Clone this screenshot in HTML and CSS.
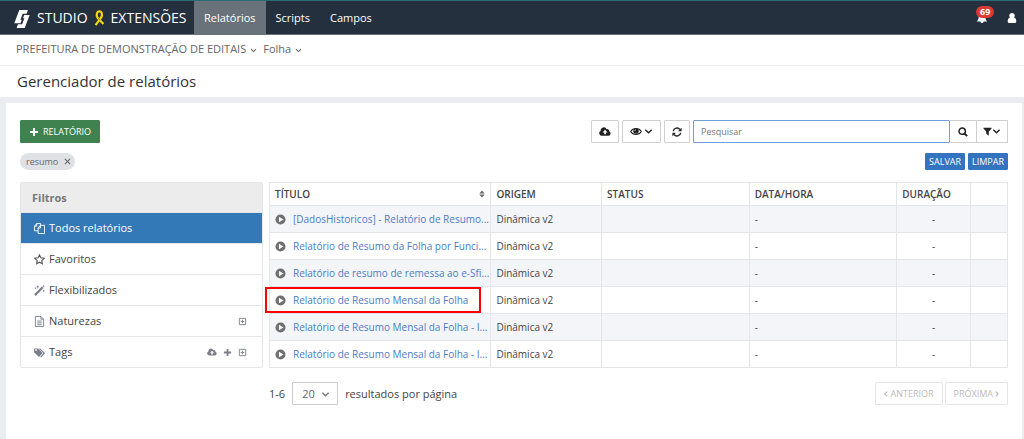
FILE: index.html
```html
<!DOCTYPE html>
<html lang="pt-BR">
<head>
<meta charset="utf-8">
<meta name="viewport" content="width=device-width, initial-scale=1">
<title>Gerenciador de relatórios</title>
<link rel="stylesheet" href="styles.css">
</head>
<body>
<svg class="sprite" aria-hidden="true">
  <symbol id="chevron" viewBox="0 0 10 10"><path d="M1.5 3 5 6.5 8.5 3" fill="none" stroke="currentColor" stroke-width="1.5"/></symbol>
  <symbol id="plus" viewBox="0 0 10 10"><path d="M5 1v8M1 5h8" fill="none" stroke="currentColor" stroke-width="2"/></symbol>
  <symbol id="cloud" viewBox="0 0 16 12"><path fill="currentColor" fill-rule="evenodd" d="M3.6 11.5A3.3 3.3 0 0 1 2.2 5.2 4.2 4.2 0 0 1 10.2 3a2.3 2.3 0 0 1 3.2 2.7 3 3 0 0 1-.6 5.8zM8 3.8 4.8 7.2H7v2.6h2.2V7.2h2.2z"/></symbol>
  <symbol id="play" viewBox="0 0 12 12"><path fill="currentColor" fill-rule="evenodd" d="M6 .5a5.5 5.5 0 1 0 0 11 5.5 5.5 0 0 0 0-11zM4.3 3v6L9.3 6z"/></symbol>
  <symbol id="expand" viewBox="0 0 10 10"><path d="M1.5 1.5h7v7h-7zM5 3v4M3 5h4" fill="none" stroke="currentColor"/></symbol>
</svg>

<header class="topbar">
  <a class="brand" href="#">
    <svg class="logo" viewBox="0 0 16 18" aria-hidden="true"><path fill="#fff" d="M5.300 0h8.600L12.600 3.800H8.700L6.400 9.800h1.400L6.500 13.200H.3zM10.200 4.900h5.500L10.700 18H2.600L4 14.200h4.100l2.300-6H9z"/></svg>
    <span>STUDIO</span>
    <svg class="ribbon" viewBox="0 0 11 16" aria-hidden="true"><path d="M1.600 15.200 7.200 7.500C8.600 5 8 1.400 5.400 1.400S2 5 3.400 7.500l6 6.500" fill="none" stroke="#f5d50a" stroke-width="2.200"/><path d="M3.800 7.600 6.200 10.600" stroke="#ad8a08" stroke-width="1"/></svg>
    <span>EXTENSÕES</span>
  </a>
  <nav class="menu">
    <a class="menu-link active" href="#">Relatórios</a>
    <a class="menu-link" href="#">Scripts</a>
    <a class="menu-link" href="#">Campos</a>
  </nav>
  <div class="account">
    <button class="plain bell" aria-label="Notificações">
      <svg class="icon12" viewBox="0 0 12 12" aria-hidden="true"><path fill="#fff" d="M6 1C3.500 1 2.700 3 2.700 5S2 8.300.7 9.500h3.800a1.500 1.500 0 0 0 3 0h3.800C10 8.300 9.300 7 9.300 5S8.500 1 6 1z"/></svg>
      <span class="badge">69</span>
    </button>
    <button class="plain" aria-label="Conta">
      <svg class="icon12" viewBox="0 0 12 12" aria-hidden="true"><path fill="#fff" d="M6 1a2.700 2.700 0 0 1 2 4.600C9.800 5.800 10.300 8 10.300 9.500c0 .9-.6 1.500-1.400 1.500H3.100c-.8 0-1.400-.6-1.400-1.500 0-1.500.5-3.700 2.300-3.900A2.700 2.700 0 0 1 6 1z"/></svg>
    </button>
  </div>
</header>

<nav class="context">
  <button class="plain context-item">PREFEITURA DE DEMONSTRAÇÃO DE EDITAIS <svg class="icon9"><use href="#chevron"/></svg></button>
  <button class="plain context-item">Folha <svg class="icon9"><use href="#chevron"/></svg></button>
</nav>
<div class="heading"><h1>Gerenciador de relatórios</h1></div>

<main class="card">
  <div class="toolbar">
    <button class="btn create"><svg class="icon10"><use href="#plus"/></svg>RELATÓRIO</button>
    <div class="tools">
      <button class="btn" aria-label="Enviar"><svg class="cloud"><use href="#cloud"/></svg></button>
      <button class="btn view" aria-label="Visualizar">
        <svg class="eye" viewBox="0 0 14 10" aria-hidden="true"><path d="M.8 5C3.500.4 10.500.4 13.200 5 10.500 9.600 3.500 9.600.8 5z" fill="none" stroke="currentColor" stroke-width="1.200"/><circle cx="7" cy="4.500" r="3.200" fill="currentColor"/><path d="M5.500 4.300A1.500 1.500 0 0 1 7 2.900" fill="none" stroke="#fff" stroke-width=".7"/></svg>
        <svg class="icon9"><use href="#chevron"/></svg>
      </button>
      <button class="btn" aria-label="Atualizar">
        <svg class="icon10" viewBox="0 0 12 12" aria-hidden="true"><path d="M1.500 5A4.600 4.600 0 0 1 9.600 3M10.500 7a4.600 4.600 0 0 1-8.100 2" fill="none" stroke="currentColor" stroke-width="1.700"/><path fill="currentColor" d="M11.500.8V5H7.300zM.5 11.200V7h4.200z"/></svg>
      </button>
      <form class="search">
        <input type="text" placeholder="Pesquisar" aria-label="Pesquisar">
        <button class="btn find" type="button" aria-label="Buscar"><svg class="icon10" viewBox="0 0 12 12" aria-hidden="true"><circle cx="5" cy="5" r="3.800" fill="none" stroke="currentColor" stroke-width="1.800"/><path d="m7.800 7.800 3.200 3.200" stroke="currentColor" stroke-width="2.200"/></svg></button>
        <button class="btn filter" type="button" aria-label="Filtrar"><svg class="icon9" viewBox="0 0 10 10" aria-hidden="true"><path fill="currentColor" d="M.5.8h9v1L6.400 5v4.800L3.600 7.600V5L.5 1.800z"/></svg><svg class="icon9"><use href="#chevron"/></svg></button>
      </form>
    </div>
  </div>

  <div class="applied">
    <span class="chip">resumo <button class="plain" aria-label="Remover resumo"><svg class="icon7" viewBox="0 0 8 8" aria-hidden="true"><path d="m1 1 6 6M7 1 1 7" stroke="currentColor" stroke-width="1.200"/></svg></button></span>
    <div class="applied-actions">
      <button class="btn primary">SALVAR</button>
      <button class="btn primary">LIMPAR</button>
    </div>
  </div>

  <div class="content">
    <aside class="filters">
      <h2>Filtros</h2>
      <ul>
        <li class="selected"><svg class="icon11" viewBox="0 0 12 12" aria-hidden="true"><path d="M4.500 8.500h-4v-5l2.500-3h4v2M3 .5v3H.5M4.500 5.500l2.500-3h4.500v9h-7zM7 2.500v3H4.500" fill="none" stroke="currentColor"/></svg><a href="#">Todos relatórios</a></li>
        <li><svg class="icon11 dark" viewBox="0 0 12 12" aria-hidden="true"><path d="m6 1 1.500 3.200 3.600.5-2.600 2.500.6 3.500L6 9l-3.100 1.700.6-3.500L.9 4.700l3.600-.5z" fill="none" stroke="currentColor" stroke-width="1.200"/></svg><a href="#">Favoritos</a></li>
        <li><svg class="icon11" viewBox="0 0 12 12" aria-hidden="true"><path d="m1 11 8.500-8.500" stroke="currentColor" stroke-width="2.500"/><path d="M4 .5v3M2.500 2h3M10.500.3v2M9.500 1.300h2M10.500 5.500v2M9.500 6.500h2M1.500 2.500v2" stroke="currentColor" stroke-width=".8"/></svg><a href="#">Flexibilizados</a></li>
        <li><svg class="icon11" viewBox="0 0 12 12" aria-hidden="true"><path d="M1.500.5h6l3 3v8h-9zM7.500.5v3h3M3.500 5.500h5M3.500 7.500h5M3.500 9.500h5" fill="none" stroke="currentColor"/></svg><a href="#">Naturezas</a>
          <span class="row-actions"><button class="plain" aria-label="Expandir naturezas"><svg class="icon9"><use href="#expand"/></svg></button></span></li>
        <li><svg class="icon11" viewBox="0 0 12 12" aria-hidden="true"><path fill="currentColor" fill-rule="evenodd" d="M0 1.500h4.500l5 5-4 4.500L0 5.800zM1.200 3.200a1 1 0 1 0 2 0 1 1 0 0 0-2 0z"/><path d="M6 1.800 11.200 6.700 7.300 11" fill="none" stroke="currentColor" stroke-width="1.200"/></svg><a href="#">Tags</a>
          <span class="row-actions"><button class="plain" aria-label="Enviar tags"><svg class="cloud small"><use href="#cloud"/></svg></button><button class="plain" aria-label="Nova tag"><svg class="icon9"><use href="#plus"/></svg></button><button class="plain" aria-label="Expandir tags"><svg class="icon9"><use href="#expand"/></svg></button></span></li>
      </ul>
    </aside>

    <section class="results">
      <table>
        <colgroup><col class="c-title"><col class="c-origin"><col class="c-status"><col class="c-date"><col class="c-time"><col class="c-menu"></colgroup>
        <thead>
          <tr><th><span class="sort">TÍTULO <svg class="sorter" viewBox="0 0 6 9" aria-hidden="true"><path fill="currentColor" d="M0 4 3 .5 6 4zM0 5h6L3 8.500z"/></svg></span></th><th>ORIGEM</th><th>STATUS</th><th>DATA/HORA</th><th>DURAÇÃO</th><th></th></tr>
        </thead>
        <tbody>
          <tr><td><div class="report"><svg class="icon11"><use href="#play"/></svg><span class="name"><a href="#">[DadosHistoricos] - Relatório de Resumo...</a></span></div></td><td>Dinâmica v2</td><td></td><td>-</td><td class="center">-</td><td></td></tr>
          <tr><td><div class="report"><svg class="icon11"><use href="#play"/></svg><span class="name"><a href="#">Relatório de Resumo da Folha por Funci...</a></span></div></td><td>Dinâmica v2</td><td></td><td>-</td><td class="center">-</td><td></td></tr>
          <tr><td><div class="report"><svg class="icon11"><use href="#play"/></svg><span class="name"><a href="#">Relatório de resumo de remessa ao e-Sfi...</a></span></div></td><td>Dinâmica v2</td><td></td><td>-</td><td class="center">-</td><td></td></tr>
          <tr><td class="marked"><div class="report"><svg class="icon11"><use href="#play"/></svg><span class="name"><a href="#">Relatório de Resumo Mensal da Folha</a></span></div></td><td>Dinâmica v2</td><td></td><td>-</td><td class="center">-</td><td></td></tr>
          <tr><td><div class="report"><svg class="icon11"><use href="#play"/></svg><span class="name"><a href="#">Relatório de Resumo Mensal da Folha - I...</a></span></div></td><td>Dinâmica v2</td><td></td><td>-</td><td class="center">-</td><td></td></tr>
          <tr><td><div class="report"><svg class="icon11"><use href="#play"/></svg><span class="name"><a href="#">Relatório de Resumo Mensal da Folha - I...</a></span></div></td><td>Dinâmica v2</td><td></td><td>-</td><td class="center">-</td><td></td></tr>
        </tbody>
      </table>
      <div class="pager">
        <span>1-6</span>
        <span class="select"><select id="page-size"><option>20</option><option>50</option></select><svg class="icon9"><use href="#chevron"/></svg></span>
        <label for="page-size">resultados por página</label>
        <div class="pages">
          <button class="btn" disabled><svg class="arrow" viewBox="0 0 5 8" aria-hidden="true"><path d="M4 1 1 4l3 3" fill="none" stroke="currentColor" stroke-width="1.500"/></svg>ANTERIOR</button>
          <button class="btn" disabled>PRÓXIMA<svg class="arrow" viewBox="0 0 5 8" aria-hidden="true"><path d="m1 1 3 3-3 3" fill="none" stroke="currentColor" stroke-width="1.500"/></svg></button>
        </div>
      </div>
    </section>
  </div>
</main>
</body>
</html>
```

FILE: styles.css
```css
* { box-sizing: border-box; }
body {
  margin: 0;
  min-height: 100vh;
  display: flex;
  flex-direction: column;
  background: #ebecf0;
  color: #444;
  font: 11px/16px "Open Sans", "Noto Sans", sans-serif;
}
a { color: inherit; text-decoration: none; }
h1, h2, ul { margin: 0; padding: 0; font-weight: 400; list-style: none; }
button, input, select { font: inherit; color: inherit; }
svg { display: block; flex: none; }
.sprite { position: absolute; width: 0; height: 0; }
.plain { padding: 0; border: 0; background: none; cursor: pointer; }
.icon7 { width: 7px; height: 7px; }
.icon9 { width: 9px; height: 9px; }
.icon10 { width: 10px; height: 10px; }
.icon11 { width: 11px; height: 11px; }
.icon12 { width: 12px; height: 12px; }
.cloud { width: 12px; height: 9px; }
.cloud.small { width: 10px; height: 8px; }
.eye { width: 12px; height: 9px; }

.topbar {
  display: flex;
  height: 35px;
  border-top: 1px solid #2b6c72;
  border-bottom: 1px solid #69717a;
  background: #24303e;
  color: #fff;
}
.brand {
  display: flex;
  align-items: center;
  gap: 6px;
  width: 194px;
  padding-left: 14px;
  font-size: 14px;
  white-space: nowrap;
}
.logo { width: 16px; height: 18px; margin: 2px 1px 0 0; }
.ribbon { width: 11px; height: 16px; }
.menu { display: flex; }
.menu-link { padding: 0 10px; font-size: 11px; line-height: 33px; }
.menu-link.active { background: #69717a; }
.account { display: flex; align-items: center; gap: 18px; margin-left: auto; padding-right: 6px; }
.bell { position: relative; }
.badge {
  position: absolute;
  left: 0;
  top: -6px;
  padding: 0 4px;
  border-radius: 6px;
  background: #d93a33;
  color: #fff;
  font-size: 9px;
  font-weight: 700;
  line-height: 12px;
}

.context {
  display: flex;
  gap: 6px;
  padding: 6px 16px 8px;
  border-bottom: 1px solid #ededee;
  background: #fff;
  color: #666;
}
.context-item { display: flex; align-items: center; gap: 4px; }
.context .icon9 { margin-top: 3px; width: 7px; }
.heading { padding: 5px 17px 6px; background: #fff; }
h1 { color: #333; font-size: 15px; line-height: 20px; }

.card { flex: 1; margin: 6px 2px 0 6px; padding: 17px 14px 32px; background: #fff; }
.btn {
  display: flex;
  align-items: center;
  justify-content: center;
  gap: 4px;
  height: 23px;
  padding: 0 7px;
  border: 1px solid #d0d0d0;
  border-radius: 1px;
  background: #fff;
  color: #222;
  font-size: 9px;
  white-space: nowrap;
}
.toolbar { display: flex; justify-content: space-between; gap: 16px; }
.create { padding: 0 8px; border-color: #40824f; background: #40824f; color: #fff; }
.tools { display: flex; gap: 3px; }
.view { gap: 2px; }
.search { display: flex; }
.search input {
  width: 257px;
  min-width: 0;
  height: 23px;
  padding: 0 7px;
  border: 1px solid #6e9fda;
  border-radius: 1px;
  background: #fff;
  font-size: 9px;
}
.search input::placeholder { color: #777; opacity: 1; }
.search .btn { gap: 0; border-left: 0; border-radius: 0; }
.search .find { padding: 0 8px; }
.search .filter { padding: 0 6px; }

.applied { display: flex; justify-content: space-between; margin-top: 10px; }
.chip {
  display: flex;
  align-items: center;
  gap: 6px;
  padding: 0 4px 0 6px;
  height: 17px;
  border-radius: 9px;
  background: #e0e1e5;
  color: #666;
  font-size: 9px;
}
.applied-actions { display: flex; gap: 3px; }
.primary { height: 17px; padding: 0 3px; border-color: #3373c0; background: #3373c0; color: #fff; }

.content { display: grid; grid-template-columns: minmax(0, 243fr) minmax(0, 739fr); gap: 6px; margin-top: 12px; align-items: start; }
.filters { border: 1px solid #e6e6e6; border-radius: 2px; }
.filters h2 { padding: 7px 11px 6px; background: #ececec; color: #777; font-size: 11px; line-height: 16px; font-weight: 700; }
.filters li { display: flex; align-items: center; gap: 4px; height: 31px; padding: 0 15px 0 13px; border-top: 1px solid #e6e6e6; color: #7c7f8b; }
.filters li a { color: #444; }
.filters .selected, .filters .selected a { background: #3379b7; color: #fff; }
.filters .dark { color: #555; }
.row-actions { display: flex; align-items: center; gap: 6px; margin-left: auto; }

table { width: 100%; table-layout: fixed; border-collapse: collapse; }
.c-title { width: 30%; }
.c-origin { width: 15%; }
.c-status { width: 20%; }
.c-date { width: 20%; }
.c-time { width: 10%; }
.c-menu { width: 5%; }
th, td { height: 27px; padding: 0 5px; border: 1px solid #e4e5e8; font-size: 10px; text-align: left; }
th { height: 23px; font-weight: 600; }
tbody td:first-child { padding-right: 0; }
tbody tr:nth-child(odd) { background: #f4f5f9; }
td.center { text-align: center; }
.sort, .report { display: flex; align-items: center; }
.sort { justify-content: space-between; }
.sorter { width: 6px; height: 8px; color: #666; }
.report { gap: 7px; color: #707070; }
.name { min-width: 0; overflow: hidden; text-overflow: ellipsis; white-space: nowrap; }
.name a { color: #4b7cc5; }
.marked { position: relative; }
.marked::after { content: ""; position: absolute; inset: 0 9px 0 -5px; border: 2px solid #f00; }

.pager { display: flex; align-items: center; margin-top: 14px; gap: 7px; }
.select { position: relative; }
.select select { width: 46px; height: 23px; padding: 0 9px; border: 1px solid #ccc; border-radius: 1px; background: #fff; color: #666; appearance: none; }
.select svg { position: absolute; right: 8px; top: 8px; color: #777; pointer-events: none; }
.pages { display: flex; gap: 2px; margin-left: auto; }
.pages .btn { gap: 2px; padding: 0 8px; border-color: #e5e5e5; color: #bbb; }
.arrow { width: 4px; height: 8px; }
```
